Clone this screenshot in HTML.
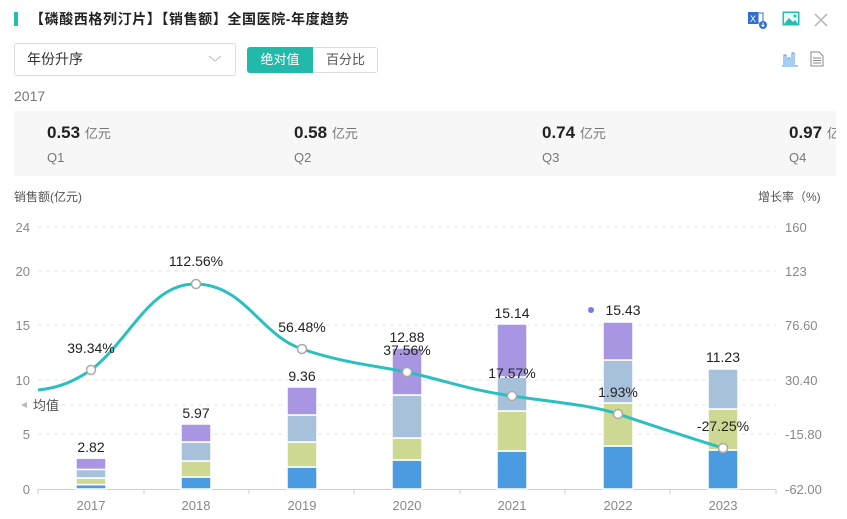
<!DOCTYPE html>
<html><head><meta charset="utf-8"><style>
*{margin:0;padding:0;box-sizing:border-box}
body{width:847px;height:519px;background:#fff;font-family:"Liberation Sans","Noto Sans CJK SC",sans-serif;position:relative;overflow:hidden;color:#333}
.abs{position:absolute}
</style></head><body>
<div class="abs" style="left:14px;top:12px;width:4px;height:14px;background:#22bfae"></div>
<div class="abs" style="left:30px;top:9px;font-size:14px;font-weight:bold;color:#222;letter-spacing:0.6px">【磷酸西格列汀片】【销售额】全国医院-年度趋势</div>
<svg class="abs" style="left:748px;top:10px" width="20" height="20" viewBox="0 0 20 20"><rect x="0" y="2" width="10" height="12" fill="#2f6fd0"/><text x="2" y="12" font-size="9" fill="#fff" font-family="Liberation Sans">X</text><rect x="10" y="3" width="5" height="10" fill="none" stroke="#2f6fd0"/><circle cx="15" cy="15" r="4" fill="#2f6fd0"/><path d="M15 12.5v4M13.5 15l1.5 1.5 1.5-1.5" stroke="#fff" fill="none"/></svg>
<svg class="abs" style="left:782px;top:11px" width="18" height="16" viewBox="0 0 18 16"><rect x="0.5" y="0.5" width="17" height="14" fill="#22bfae"/><rect x="2" y="2" width="14" height="11" fill="#e8faf8"/><path d="M2 13l5-6 4 4 2-2 3 4z" fill="#22bfae"/><circle cx="13" cy="5" r="1.5" fill="#22bfae"/></svg>
<svg class="abs" style="left:813px;top:12px" width="16" height="16"><path d="M2 2l12 12M14 2L2 14" stroke="#bbb" stroke-width="1.6"/></svg>
<div class="abs" style="left:14px;top:43px;width:222px;height:33px;border:1px solid #ddd;border-radius:3px;font-size:14px;line-height:31px;padding-left:12px">年份升序</div>
<svg class="abs" style="left:208px;top:55px" width="14" height="8"><path d="M1 1l6 5 6-5" stroke="#bbb" fill="none"/></svg>
<div class="abs" style="left:247px;top:47px;width:131px;height:26px;border:1px solid #ddd;border-radius:3px"></div>
<div class="abs" style="left:247px;top:47px;width:66px;height:26px;background:#22b9a9;border-radius:3px 0 0 3px;color:#fff;font-size:13px;line-height:26px;text-align:center">绝对值</div>
<div class="abs" style="left:313px;top:47px;width:65px;height:26px;color:#555;font-size:13px;line-height:26px;text-align:center">百分比</div>
<svg class="abs" style="left:782px;top:51px" width="16" height="16"><path d="M2 14V4h2v10M6 14V7h2v7M10 14V2h2v12" stroke="#4a9be0" fill="none"/><path d="M0 15h16" stroke="#4a9be0"/></svg>
<svg class="abs" style="left:810px;top:51px" width="14" height="16"><path d="M1 1h8l4 4v10H1z" fill="none" stroke="#888"/><path d="M3 7h8M3 9.5h8M3 12h8" stroke="#888"/></svg>
<div class="abs" style="left:14px;top:88px;font-size:14px;color:#777">2017</div>
<div class="abs" style="left:14px;top:111px;width:822px;height:65px;background:#f7f7f7;overflow:hidden">
<div class="abs" style="left:33px;top:12px;font-size:17px;font-weight:bold;color:#222">0.53 <span style="font-size:13px;font-weight:normal;color:#777">亿元</span></div>
<div class="abs" style="left:33px;top:39px;font-size:13px;color:#777">Q1</div>
<div class="abs" style="left:280px;top:12px;font-size:17px;font-weight:bold;color:#222">0.58 <span style="font-size:13px;font-weight:normal;color:#777">亿元</span></div>
<div class="abs" style="left:280px;top:39px;font-size:13px;color:#777">Q2</div>
<div class="abs" style="left:528px;top:12px;font-size:17px;font-weight:bold;color:#222">0.74 <span style="font-size:13px;font-weight:normal;color:#777">亿元</span></div>
<div class="abs" style="left:528px;top:39px;font-size:13px;color:#777">Q3</div>
<div class="abs" style="left:775px;top:12px;font-size:17px;font-weight:bold;color:#222;white-space:nowrap">0.97 <span style="font-size:13px;font-weight:normal;color:#777">亿元</span></div>
<div class="abs" style="left:775px;top:39px;font-size:13px;color:#777">Q4</div>
</div>
<div class="abs" style="left:14px;top:188px;font-size:12px;color:#555">销售额(亿元)</div>
<div class="abs" style="left:758px;top:188px;font-size:12px;color:#555">增长率（%)</div>
<svg class="abs" style="left:0;top:0" width="847" height="519" font-family="Liberation Sans,Noto Sans CJK SC,sans-serif">
<g stroke="#e0e4e8" stroke-dasharray="4,4">
<path d="M38 227H776M38 271H776M38 325H776M38 380H776M38 434H776M38 405H776"/>
</g>
<path d="M38 489.5H776" stroke="#ccd"/>
<g stroke="#ccd"><path d="M38 489v5M144 489v5M249 489v5M354 489v5M460 489v5M565 489v5M670 489v5M776 489v5"/></g>
<g fill="#888" font-size="13" text-anchor="end">
<text x="30" y="232">24</text><text x="30" y="276">20</text><text x="30" y="330">15</text><text x="30" y="385">10</text><text x="30" y="439">5</text><text x="30" y="494">0</text>
</g>
<g fill="#888" font-size="13">
<text x="785" y="232">160</text><text x="785" y="276">123</text><text x="785" y="330">76.60</text><text x="785" y="385">30.40</text><text x="785" y="439">-15.80</text><text x="785" y="494">-62.00</text>
</g>
<g fill="#888" font-size="13" text-anchor="middle">
<text x="91" y="510">2017</text><text x="196" y="510">2018</text><text x="302" y="510">2019</text><text x="407" y="510">2020</text><text x="512" y="510">2021</text><text x="618" y="510">2022</text><text x="723" y="510">2023</text>
</g>
<path d="M21 405l6-3v6z" fill="#bbb"/><text x="33" y="410" font-size="13" fill="#555">均值</text>
<g stroke="#fff" stroke-width="1.5">
<rect x="76" y="484.6" width="30" height="4.4" fill="#4a9be0"/><rect x="76" y="478" width="30" height="6.6" fill="#cdd993"/><rect x="76" y="469.4" width="30" height="8.6" fill="#a8c1da"/><rect x="76" y="458.2" width="30" height="11.2" fill="#a996e3"/>
<rect x="181" y="477" width="30" height="12" fill="#4a9be0"/><rect x="181" y="461" width="30" height="16" fill="#cdd993"/><rect x="181" y="442" width="30" height="19" fill="#a8c1da"/><rect x="181" y="424" width="30" height="18" fill="#a996e3"/>
<rect x="287" y="467" width="30" height="22" fill="#4a9be0"/><rect x="287" y="442" width="30" height="25" fill="#cdd993"/><rect x="287" y="415" width="30" height="27" fill="#a8c1da"/><rect x="287" y="387" width="30" height="28" fill="#a996e3"/>
<rect x="392" y="460" width="30" height="29" fill="#4a9be0"/><rect x="392" y="438" width="30" height="22" fill="#cdd993"/><rect x="392" y="395" width="30" height="43" fill="#a8c1da"/><rect x="392" y="348" width="30" height="47" fill="#a996e3"/>
<rect x="497" y="451" width="30" height="38" fill="#4a9be0"/><rect x="497" y="411" width="30" height="40" fill="#cdd993"/><rect x="497" y="377" width="30" height="34" fill="#a8c1da"/><rect x="497" y="324" width="30" height="53" fill="#a996e3"/>
<rect x="603" y="446" width="30" height="43" fill="#4a9be0"/><rect x="603" y="403" width="30" height="43" fill="#cdd993"/><rect x="603" y="360" width="30" height="43" fill="#a8c1da"/><rect x="603" y="322" width="30" height="38" fill="#a996e3"/>
<rect x="708" y="450" width="30" height="39" fill="#4a9be0"/><rect x="708" y="409" width="30" height="41" fill="#cdd993"/><rect x="708" y="369" width="30" height="40" fill="#a8c1da"/>
</g>
<g fill="#222" font-size="14" text-anchor="middle">
<text x="91" y="452">2.82</text><text x="196" y="418">5.97</text><text x="302" y="381">9.36</text><text x="407" y="342">12.88</text><text x="512" y="318">15.14</text><text x="623" y="315">15.43</text><text x="723" y="362">11.23</text>
</g>
<circle cx="591" cy="310" r="3" fill="#6f7de8"/>
<path d="M38 390C60 388 76 380 91 370C130 340 150 283 196 284C245 285 260 335 302 349C340 362 370 365 407 372C450 382 470 390 512 396C560 403 590 405 618 414C660 428 690 438 723 448" stroke="#2bbfbf" stroke-width="3" fill="none"/>
<g fill="#fff" stroke="#aaa" stroke-width="1.5">
<circle cx="91" cy="370" r="4.5"/><circle cx="196" cy="284" r="4.5"/><circle cx="302" cy="349" r="4.5"/><circle cx="407" cy="372" r="4.5"/><circle cx="512" cy="396" r="4.5"/><circle cx="618" cy="414" r="4.5"/><circle cx="723" cy="448" r="4.5"/>
</g>
<g fill="#222" font-size="14" text-anchor="middle">
<text x="91" y="353">39.34%</text><text x="196" y="266">112.56%</text><text x="302" y="332">56.48%</text><text x="407" y="355">37.56%</text><text x="512" y="378">17.57%</text><text x="618" y="397">1.93%</text><text x="723" y="431">-27.25%</text>
</g>
</svg>
</body></html>
